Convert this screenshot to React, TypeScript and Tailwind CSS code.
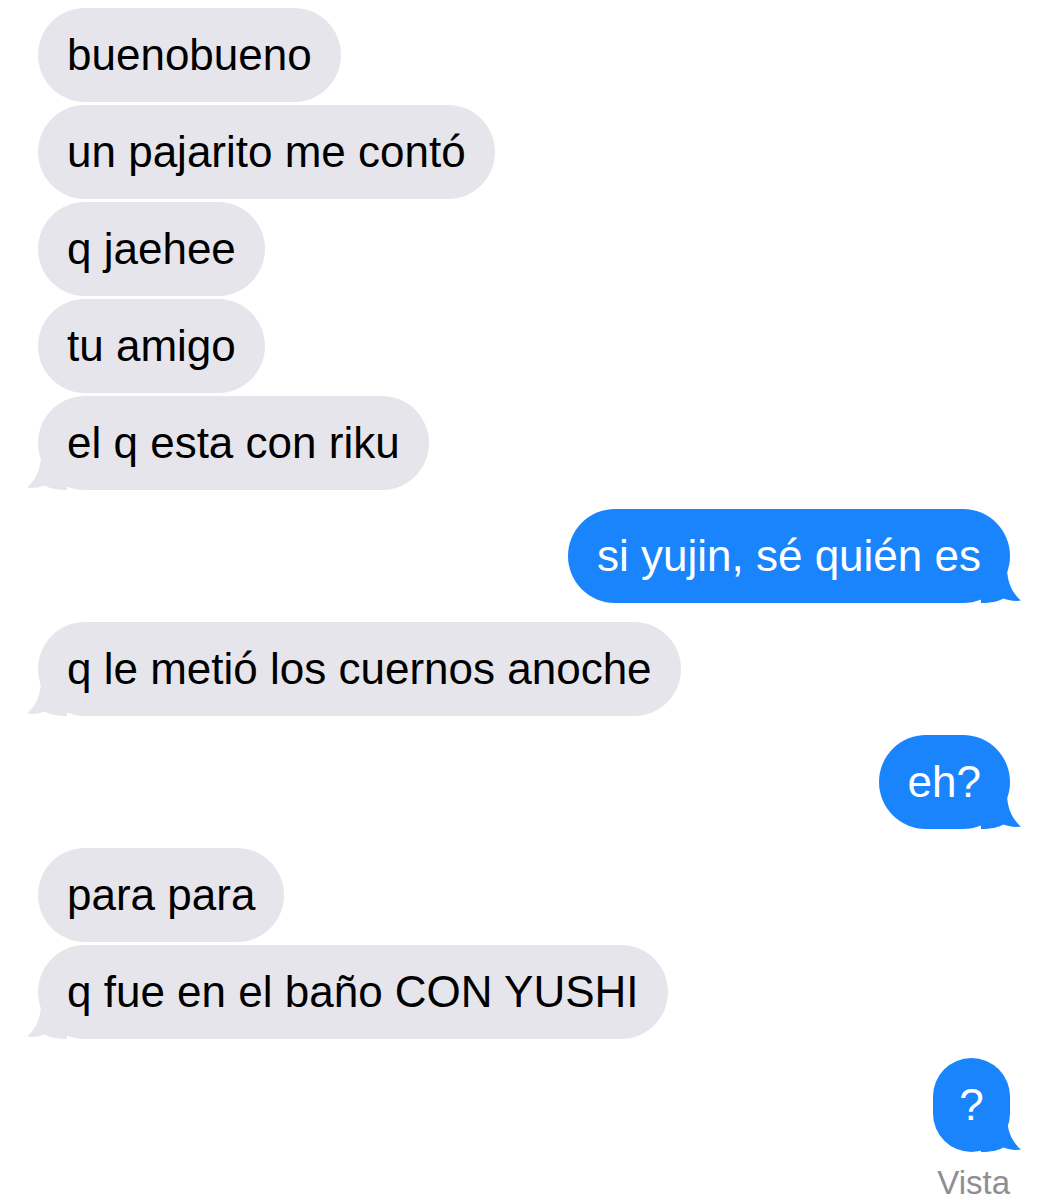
import React from "react";

type Msg = { text: string; tail?: boolean; narrow?: boolean };
type Group = { side: "left" | "right"; msgs: Msg[]; footer?: string };

const groups: Group[] = [
  {
    side: "left",
    msgs: [
      { text: "buenobueno" },
      { text: "un pajarito me contó" },
      { text: "q jaehee" },
      { text: "tu amigo" },
      { text: "el q esta con riku", tail: true },
    ],
  },
  { side: "right", msgs: [{ text: "si yujin, sé quién es", tail: true }] },
  { side: "left", msgs: [{ text: "q le metió los cuernos anoche", tail: true }] },
  { side: "right", msgs: [{ text: "eh?", tail: true }] },
  {
    side: "left",
    msgs: [{ text: "para para" }, { text: "q fue en el baño CON YUSHI", tail: true }],
  },
  { side: "right", msgs: [{ text: "?", tail: true, narrow: true }], footer: "Vista" },
];

function Tail({ side }: { side: "left" | "right" }) {
  const fill = side === "left" ? "#e6e5eb" : "#1a84fc";
  return (
    <svg
      width="40"
      height="34"
      viewBox="0 0 40 34"
      className={
        side === "left"
          ? "absolute bottom-0 -left-[11px]"
          : "absolute bottom-0 -right-[11px] -scale-x-100"
      }
    >
      <path
        d="M14 0 C13.5 13 9 24 0 31.5 C6 32.5 12 31.5 17.5 29.5 C23 32.5 30 34 40 34 L40 0 Z"
        fill={fill}
      />
    </svg>
  );
}

function Bubble({ msg, side }: { msg: Msg; side: "left" | "right" }) {
  const base =
    "relative flex h-[94px] items-center rounded-[47px] text-[44px] leading-none whitespace-nowrap";
  const color = side === "left" ? "bg-[#e6e5eb] text-black" : "bg-[#1a84fc] text-white";
  const pad = msg.narrow ? "w-[77px] justify-center" : "px-[29px]";
  return (
    <div className={`${base} ${color} ${pad}`}>
      {msg.tail && <Tail side={side} />}
      <span className="relative">{msg.text}</span>
    </div>
  );
}

export default function App() {
  return (
    <div
      className="min-h-[1200px] w-full bg-white px-[38px] pt-[8px]"
      style={{ fontFamily: '"Liberation Sans", Arial, sans-serif' }}
    >
      <div className="flex flex-col gap-[19px]">
        {groups.map((g, i) => (
          <div
            key={i}
            className={`flex flex-col gap-[3px] ${g.side === "left" ? "items-start" : "items-end"}`}
          >
            {g.msgs.map((m, j) => (
              <Bubble key={j} msg={m} side={g.side} />
            ))}
            {g.footer && (
              <div className="mt-[11px] text-[33px] leading-none text-[#8e8e93]">{g.footer}</div>
            )}
          </div>
        ))}
      </div>
    </div>
  );
}
